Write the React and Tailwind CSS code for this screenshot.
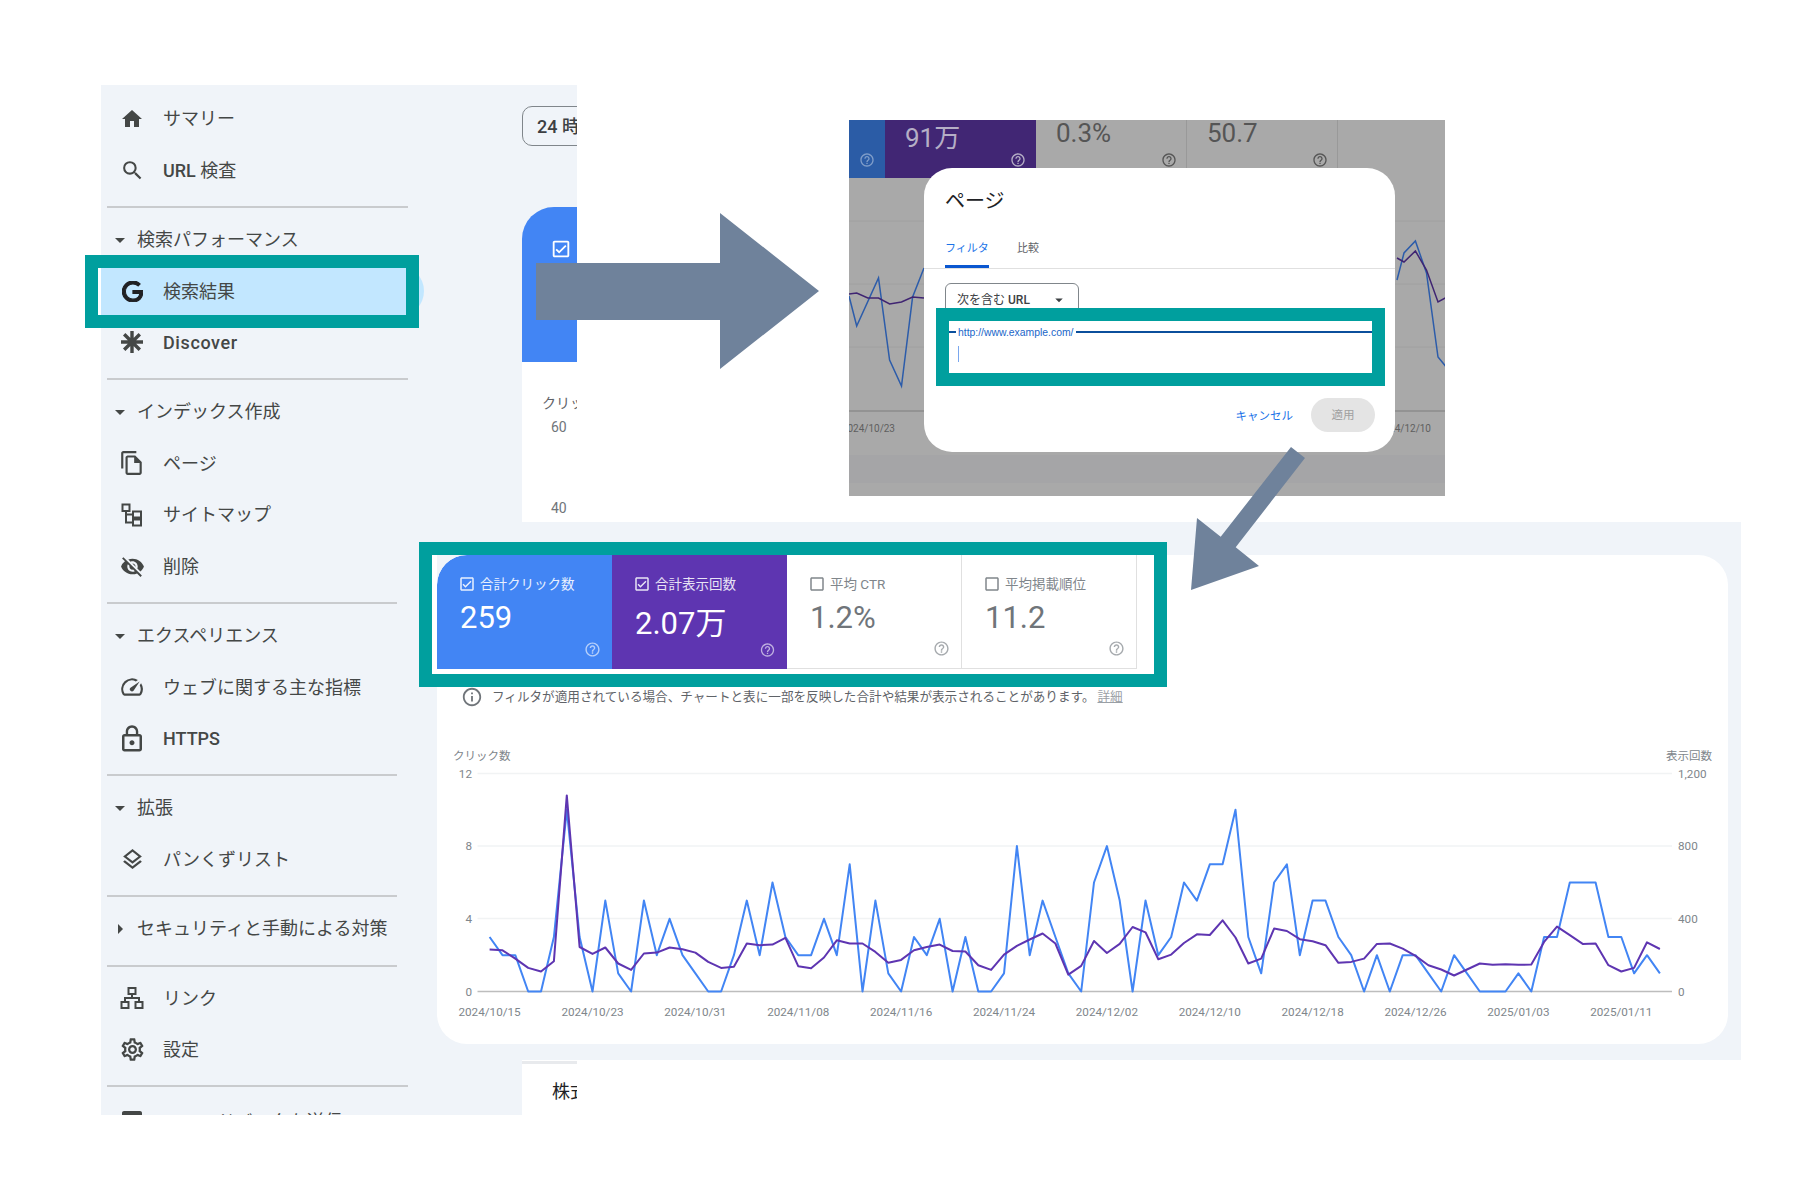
import {
  MdHome, MdSearch, MdOutlineFileCopy, MdVisibilityOff, MdSpeed, MdLockOutline, MdOutlineLayers,
  MdOutlineSettings, MdArrowDropDown, MdArrowRight, MdHelpOutline, MdInfoOutline,
  MdOutlineCheckBox, MdCheckBoxOutlineBlank, MdFeedback,
} from 'react-icons/md';
import { SiGoogle } from 'react-icons/si';

const clicks = [
  3, 2, 2, 0, 0, 3, 10, 3, 0, 5, 1, 0, 5, 2, 4, 2, 1, 0, 0, 2, 5, 2, 6, 3, 2, 2, 4, 2, 7, 0,
  5, 1, 0, 3, 2, 4, 0, 3, 0, 0, 1, 8, 2, 5, 3, 1, 0, 6, 8, 5, 0, 5, 2, 3, 6, 5, 7, 7, 10, 3,
  1, 6, 7, 2, 5, 5, 3, 2, 0, 2, 0, 2, 2, 1, 0, 2, 1, 0, 0, 0, 1, 0, 3, 3, 6, 6, 6, 3, 3, 1, 2, 1,
];
const impressions = [
  231, 227, 181, 130, 110, 167, 1079, 245, 207, 242, 154, 119, 209, 214, 242, 233, 214, 163, 130, 136,
  264, 255, 258, 295, 139, 128, 187, 282, 264, 264, 218, 158, 174, 227, 245, 258, 223, 220, 145, 119,
  203, 251, 286, 319, 264, 93, 141, 278, 212, 262, 355, 326, 178, 203, 267, 315, 311, 392, 297, 154,
  181, 346, 333, 288, 277, 255, 158, 163, 181, 262, 264, 236, 196, 145, 121, 88, 121, 154, 147, 150,
  147, 148, 273, 357, 310, 262, 264, 145, 110, 130, 271, 234,
];
const dates = [
  '2024/10/15', '2024/10/23', '2024/10/31', '2024/11/08', '2024/11/16', '2024/11/24',
  '2024/12/02', '2024/12/10', '2024/12/18', '2024/12/26', '2025/01/03', '2025/01/11',
];

const X0 = 52.6;
const STEP = 12.86;
const AXIS_Y = 247.5;
const ICON = '#444746';

function DiscoverIcon() {
  return (
    <svg width="24" height="24" viewBox="0 0 24 24" stroke={ICON} strokeWidth="3.4">
      <path d="M12 1v22M1 12h22M4.2 4.2l15.6 15.6M19.8 4.2L4.2 19.8" />
    </svg>
  );
}

function SitemapIcon() {
  return (
    <svg width="24" height="24" viewBox="0 0 24 24" fill="none" stroke={ICON} strokeWidth="2">
      <path d="M2.500 1.500h7v6.500h-7zM13 8.500h8v6h-8zM13 16.500h8v6h-8zM6 8V19.500H13M6 11.500H13" />
    </svg>
  );
}

function LinkIcon() {
  return (
    <svg width="24" height="24" viewBox="0 0 24 24" fill="none" stroke={ICON} strokeWidth="2">
      <path d="M8.500 2h7v6h-7zM1.500 16h7v6h-7zM15.500 16h7v6h-7zM12 8v4M5 16v-4h14v4" />
    </svg>
  );
}

function NavItem({ icon, children, active }) {
  return (
    <div
      className={`flex items-center h-[51.45px] pl-[19px] gap-[19px] text-[18px] text-[#444746] ${
        active ? 'bg-[#c2e7ff] rounded-r-full w-[323px]' : ''
      }`}
    >
      <span className="flex items-center justify-center w-6 h-6 shrink-0 [&>svg]:shrink-0">{icon}</span>
      <span className="whitespace-nowrap">{children}</span>
    </div>
  );
}

function NavHeader({ open = true, children }) {
  return (
    <div className="flex items-center h-[51.45px] pl-[7px] gap-[2px] text-[18px] text-[#444746]">
      {open ? <MdArrowDropDown size={24} color={ICON} /> : <MdArrowRight size={24} color={ICON} />}
      <span className="ml-[3px] whitespace-nowrap">{children}</span>
    </div>
  );
}

function Divider({ width = 'w-[301px]' }) {
  return <div className={`h-[2px] ml-[6px] mt-[10px] mb-[6px] bg-[#c9cbce] ${width}`} />;
}

function Sidebar() {
  return (
    <nav className="w-[421px] shrink-0 pt-[8px]">
      <NavItem icon={<MdHome size={24} color={ICON} />}>サマリー</NavItem>
      <NavItem icon={<MdSearch size={25} color={ICON} />}><span className="font-medium">URL</span> 検査</NavItem>
      <Divider />
      <NavHeader>検索パフォーマンス</NavHeader>
      <NavItem active icon={<SiGoogle size={21} color="#202124" stroke="#202124" strokeWidth={1.2} />}>検索結果</NavItem>
      <NavItem icon={<DiscoverIcon />}><span className="font-medium tracking-[0.6px]">Discover</span></NavItem>
      <Divider />
      <NavHeader>インデックス作成</NavHeader>
      <NavItem icon={<MdOutlineFileCopy size={26} color={ICON} />}>ページ</NavItem>
      <NavItem icon={<SitemapIcon />}>サイトマップ</NavItem>
      <NavItem icon={<MdVisibilityOff size={25} color={ICON} />}>削除</NavItem>
      <Divider width="w-[290px]" />
      <NavHeader>エクスペリエンス</NavHeader>
      <NavItem icon={<MdSpeed size={26} color={ICON} />}>ウェブに関する主な指標</NavItem>
      <NavItem icon={<MdLockOutline size={30} color={ICON} />}><span className="font-medium">HTTPS</span></NavItem>
      <Divider width="w-[290px]" />
      <NavHeader>拡張</NavHeader>
      <NavItem icon={<MdOutlineLayers size={25} color={ICON} />}>パンくずリスト</NavItem>
      <Divider width="w-[290px]" />
      <NavHeader open={false}>セキュリティと手動による対策</NavHeader>
      <Divider width="w-[290px]" />
      <NavItem icon={<LinkIcon />}>リンク</NavItem>
      <NavItem icon={<MdOutlineSettings size={27} color={ICON} />}>設定</NavItem>
      <Divider />
      <div className="pt-[2px]">
        <NavItem icon={<MdFeedback size={24} color={ICON} />}>フィードバックを送信</NavItem>
      </div>
    </nav>
  );
}

// the page behind the sidebar, cut off by the edge of the crop
function PagePeek() {
  return (
    <div className="w-[55px] shrink-0 overflow-hidden">
      <div className="w-[300px]">
        <div className="mt-[21px] w-[200px] h-[40px] flex items-center pl-[14px] border border-[#80868b] rounded-[10px] text-[18px] font-medium text-[#3c4043]">
          24 時間
        </div>
        <div className="mt-[61px] h-[155px] pl-[28px] pt-[31px] bg-[#4285f4] rounded-tl-[32px]">
          <MdOutlineCheckBox size={22} color="#ffffff" />
        </div>
        <div className="h-[753px] bg-white text-[14px] text-[#5f6368]">
          <div className="pl-[20px] pt-[32px] leading-[18px] whitespace-nowrap">クリック数</div>
          <div className="pl-[29px] mt-[6px] leading-[18px] text-[#70757a]">60</div>
          <div className="pl-[29px] mt-[63px] leading-[18px] text-[#70757a]">40</div>
          <div className="mt-[544px] h-[3px] bg-[#e8eaed]" />
          <div className="pl-[30px] mt-[16px] text-[18px] leading-[24px] text-[#202124]">株式会社</div>
        </div>
      </div>
    </div>
  );
}

function StatTile({ label, value, checked, className, labelColor, valueClass = 'mt-[6px]' }) {
  const Box = checked ? MdOutlineCheckBox : MdCheckBoxOutlineBlank;
  return (
    <div className={`w-[175px] h-[114px] flex flex-col pl-[21px] pr-[11px] pt-[19px] pb-[11px] ${className}`}>
      <div className={`flex items-center gap-1 h-5 text-[13.500px] ${labelColor}`}>
        <Box size={18} />
        <span>{label}</span>
      </div>
      <div className={`ml-[2px] text-[31px] leading-9 ${valueClass}`}>{value}</div>
      <MdHelpOutline size={17} className={`mt-auto self-end ${labelColor} opacity-70`} />
    </div>
  );
}

function PerfChart() {
  const toPath = (data, scale) =>
    data.map((v, i) => `${i ? 'L' : 'M'}${(X0 + i * STEP).toFixed(1)} ${(AXIS_Y - v * scale).toFixed(1)}`).join(' ');
  const ticks = [
    { left: '12', right: '1,200', y: 29.5 },
    { left: '8', right: '800', y: 102 },
    { left: '4', right: '400', y: 174.500 },
    { left: '0', right: '0', y: AXIS_Y },
  ];
  return (
    <svg width="1291" height="300" className="text-[11.700px] block mt-[37px]" fill="#80868b">
      <text x="16" y="16" fontSize="11.500">クリック数</text>
      <text x="1229" y="16" fontSize="11.500">表示回数</text>
      {ticks.map((t) => (
        <g key={t.right}>
          <line x1="40.500" x2="1235" y1={t.y} y2={t.y} stroke={t.left === '0' ? '#bdbdbd' : '#f1f3f4'} strokeWidth="1.500" />
          <text x="35" y={t.y + 4} textAnchor="end">{t.left}</text>
          <text x="1241" y={t.y + 4}>{t.right}</text>
        </g>
      ))}
      {dates.map((d, i) => (
        <text key={d} x={X0 + i * 8 * STEP} y="272" textAnchor="middle">{d}</text>
      ))}
      <path d={toPath(clicks, 18.17)} fill="none" stroke="#4285f4" strokeWidth="2" strokeLinejoin="round" />
      <path d={toPath(impressions, 0.1817)} fill="none" stroke="#5e35b1" strokeWidth="2" strokeLinejoin="round" />
    </svg>
  );
}

function PerfPanel() {
  return (
    <div className="absolute left-[421px] top-[522px] w-[1320px] h-[538px] pl-[16px] pt-[33px] bg-[#f0f4f9]">
      <div className="w-[1291px] h-[489px] bg-white rounded-[30px] overflow-hidden">
        <div className="flex">
          <StatTile checked label="合計クリック数" value="259" labelColor="text-[#e8f0fe]" className="bg-[#4285f4] text-white rounded-tl-[30px]" />
          <StatTile checked label="合計表示回数" value="2.07万" labelColor="text-[#e8e4f5]" valueClass="mt-[12px]" className="bg-[#5e35b1] text-white" />
          <StatTile label="平均 CTR" value="1.2%" labelColor="text-[#80868b]" className="text-[#70757a] border-b border-r border-[#e0e0e0]" />
          <StatTile label="平均掲載順位" value="11.2" labelColor="text-[#80868b]" className="text-[#70757a] border-b border-r border-[#e0e0e0]" />
        </div>
        <div className="flex items-center h-5 mt-[18px] mb-[1px] pl-[24px] gap-[9px] text-[12.600px] text-[#5f6368]">
          <MdInfoOutline size={22} color="#70757a" />
          <span>フィルタが適用されている場合、チャートと表に一部を反映した合計や結果が表示されることがあります。</span>
          <span className="-ml-[6px] underline text-[#9aa0a6]">詳細</span>
        </div>
        <PerfChart />
      </div>
      <div className="absolute -left-[2px] top-[20px] w-[748px] h-[145px] border-[13px] border-[#009f9e]">
        <div className="w-[5px] h-full bg-white" />
      </div>
    </div>
  );
}

function FilterDialog() {
  return (
    <div className="absolute left-[75px] top-[48px] w-[471px] h-[284px] flex flex-col bg-white rounded-[28px]">
      <div className="pt-[19px] px-[21px] text-[20px] leading-7 text-[#202124]">ページ</div>
      <div className="flex gap-7 h-[35px] mt-[19px] px-[21px] border-b border-[#e0e0e0] text-[11px] leading-[30px]">
        <div className="w-[44px] h-[34px] border-b-[3px] border-[#0b57d0] text-[#1a73e8] whitespace-nowrap">フィルタ</div>
        <div className="text-[#5f6368]">比較</div>
      </div>
      <div className="flex items-center justify-between ml-[21px] mt-[14px] w-[134px] h-[32px] pl-[11px] pr-[10px] pt-[2px] border border-[#80868b] rounded-t-[6px] text-[12px] text-[#3c4043]">
        <span>次を含む <span className="font-medium">URL</span></span>
        <MdArrowDropDown size={18} />
      </div>
      <div className="absolute left-[12px] top-[140px] w-[449px] h-[78px] border-[13px] border-[#009f9e] bg-white">
        <div className="flex items-center h-[22px]">
          <div className="w-[7px] h-[2px] bg-[#0b4f9c]" />
          <span className="px-[2px] pt-[1px] font-['Liberation_Sans',sans-serif] text-[10.400px] text-[#1a66c9]">http://www.example.com/</span>
          <div className="flex-1 h-[2px] bg-[#0b4f9c]" />
        </div>
        <div className="ml-[9px] mt-[3px] w-px h-[16px] bg-[#7aa7ee]" />
      </div>
      <div className="mt-auto flex items-center justify-end gap-[18px] pr-[20px] pb-[20px] text-[11.500px] leading-[18px]">
        <span className="pt-[2px] text-[#1a73e8]">キャンセル</span>
        <span className="w-[64px] h-[34px] flex items-center justify-center rounded-full bg-[#e4e4e4] text-[#a0a0a0]">適用</span>
      </div>
    </div>
  );
}

function DimChart() {
  return (
    <svg width="596" height="376" className="absolute left-0 top-0" fill="none">
      <path d="M0 101H596M0 164H596M0 227H596" stroke="#a0a0a0" />
      <path d="M0 291H596" stroke="#8c8c8c" strokeWidth="1.500" />
      <path d="M0 176L7.700 206L29.500 158L40.600 240L52.500 266L63.600 177L75 148" stroke="#2c5caa" strokeWidth="1.500" />
      <path d="M0 174L7.700 173L18.800 178L29.500 178L40.600 184L52.500 182L63.600 177L75 178" stroke="#3f2472" strokeWidth="1.500" />
      <path d="M548 160L555 133L566.400 121L577.500 153L589 237L598 248" stroke="#2c5caa" strokeWidth="1.500" />
      <path d="M548 138L555 142L566.400 131L577.500 150L589 182L598 177" stroke="#3f2472" strokeWidth="1.500" />
      <text x="46" y="312" textAnchor="end" fontSize="10" fill="#5f5f5f">2024/10/23</text>
      <text x="582" y="312" textAnchor="end" fontSize="10" fill="#5f5f5f">2024/12/10</text>
    </svg>
  );
}

function FilterShot() {
  const help = <MdHelpOutline size={16} className="self-end" />;
  return (
    <div className="absolute left-[849px] top-[120px] w-[596px] h-[376px] bg-[#a9a9a9] overflow-hidden">
      <DimChart />
      <div className="relative flex h-[58px] text-[#555555]">
        <div className="w-[36px] flex flex-col justify-end pb-[10px] pr-[10px] bg-[#2b5ca6] text-[#7f9dc9]">{help}</div>
        <div className="w-[151px] flex flex-col justify-between pl-5 pr-[10px] pt-[4px] pb-[10px] bg-[#412674] text-[#b5aec6] text-[26px] leading-[28px]">
          <span>91万</span>{help}
        </div>
        <div className="w-[151px] h-[48px] flex flex-col justify-between pl-5 pr-[9px] border-r border-[#999999] text-[26px] leading-[26px]">
          <span>0.3%</span>{help}
        </div>
        <div className="w-[151px] h-[48px] flex flex-col justify-between pl-5 pr-[9px] border-r border-[#999999] text-[26px] leading-[26px]">
          <span>50.7</span>{help}
        </div>
      </div>
      <div className="relative mt-[277px] h-[28px] bg-[#a5a5a7]" />
      <FilterDialog />
    </div>
  );
}

export default function App() {
  return (
    <div className="relative w-[1800px] h-[1200px] overflow-hidden bg-white font-[family-name:Roboto,'Noto_Sans_CJK_JP',sans-serif]">
      <div className="absolute left-[101px] top-[85px] w-[476px] h-[1030px] flex overflow-hidden bg-[#f0f4f9]">
        <Sidebar />
        <PagePeek />
      </div>
      <div className="absolute left-[85px] top-[255px] w-[334px] h-[73px] border-[13px] border-[#009f9e]" />
      <PerfPanel />
      <FilterShot />
      <svg width="283" height="156" className="absolute left-[536px] top-[213px]" fill="#6f829b">
        <polygon points="0,50 184,50 184,0 283,78 184,156 184,107 0,107" />
      </svg>
      <svg width="115" height="143" className="absolute left-[1191px] top-[447px]" fill="#6f829b">
        <polygon points="100,0 114,11 44.700,100.300 68,119 0,143 6,71 29.700,89.700" />
      </svg>
    </div>
  );
}
